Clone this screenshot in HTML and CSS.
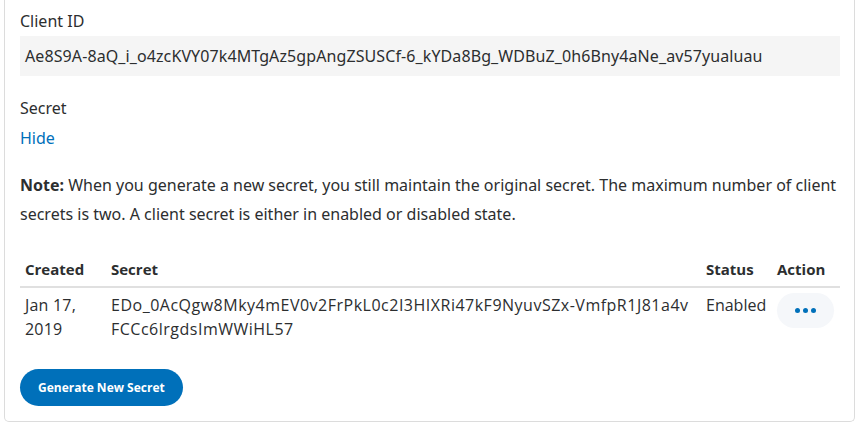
FILE: index.html
```html
<!DOCTYPE html>
<html>
<head>
<meta charset="utf-8">
<link rel="stylesheet" href="styles.css">
</head>
<body>
<div class="card">
  <div class="label">Client ID</div>
  <div class="idbox">Ae8S9A-8aQ_i_o4zcKVY07k4MTgAz5gpAngZSUSCf-6_kYDa8Bg_WDBuZ_0h6Bny4aNe_av57yualuau</div>
  <div class="label secret-label">Secret</div>
  <a class="link" href="#">Hide</a>
  <p class="note"><b>Note:</b> When you generate a new secret, you still maintain the original secret. The maximum number of client secrets is two. A client secret is either in enabled or disabled state.</p>
  <table class="secrets">
    <colgroup>
      <col class="c-created"><col class="c-secret"><col class="c-status"><col class="c-action">
    </colgroup>
    <thead>
      <tr><th>Created</th><th>Secret</th><th>Status</th><th>Action</th></tr>
    </thead>
    <tbody>
      <tr>
        <td class="date-val">Jan 17, 2019</td>
        <td class="secret-val">EDo_0AcQgw8Mky4mEV0v2FrPkL0c2I3HIXRi47kF9NyuvSZx-VmfpR1J81a4v<wbr>FCCc6lrgdsImWWiHL57</td>
        <td>Enabled</td>
        <td><button class="more" type="button"><span class="dot"></span><span class="dot"></span><span class="dot"></span></button></td>
      </tr>
    </tbody>
  </table>
  <button class="primary" type="button">Generate New Secret</button>
</div>
</body>
</html>
```
FILE: styles.css
```css
html, body {
  margin: 0;
  padding: 0;
  background: #fff;
}
body {
  font-family: "Noto Sans", "Open Sans", sans-serif;
  color: #2c2e2f;
}
.card {
  margin-left: 4px;
  width: 851px;
  box-sizing: border-box;
  height: 422px;
  border: 1px solid #dcdcdc;
  border-top: none;
  border-radius: 0 0 5px 5px;
  padding: 9px 15px 0 15px;
}
.label {
  font-size: 16px;
  line-height: 24px;
}
.idbox {
  margin-top: 3px;
  height: 40px;
  line-height: 40px;
  background: #f5f5f5;
  padding: 0 5px;
  width: 820px;
  box-sizing: border-box;
  font-size: 16px;
  letter-spacing: 0.1px;
  white-space: nowrap;
  overflow: hidden;
}
.secret-label {
  margin-top: 20px;
}
.link {
  display: block;
  margin-top: 6px;
  font-size: 16px;
  line-height: 24px;
  color: #0070ba;
  text-decoration: none;
}
.note {
  margin: 21px 0 0 0;
  font-size: 16px;
  line-height: 29px;
}
.note b {
  font-weight: 700;
}
.secrets {
  margin-top: 19px;
  width: 820px;
  border-collapse: collapse;
  table-layout: fixed;
  font-family: "Open Sans", "Noto Sans", sans-serif;
  font-size: 16px;
}
.c-created { width: 86px; }
.c-secret { width: 595px; }
.c-status { width: 71px; }
.c-action { width: 68px; }
.secrets th {
  text-align: left;
  font-weight: 700;
  font-size: 15px;
  line-height: 24px;
  padding: 9px 0 5px 5px;
  border-bottom: 2px solid #e0e0e0;
}
.secrets td {
  vertical-align: top;
  line-height: 24px;
  padding: 5px 0 0 5px;
}
.date-val {
  letter-spacing: 0.2px;
}
.secret-val {
  letter-spacing: 0.5px;
  overflow-wrap: anywhere;
}
.more {
  display: flex;
  align-items: center;
  justify-content: center;
  gap: 3px;
  width: 57px;
  height: 35px;
  border: none;
  border-radius: 18px;
  background: #f5f7fa;
  padding: 0;
  margin-top: 0;
}
.dot {
  width: 5px;
  height: 5px;
  border-radius: 50%;
  background: #0070ba;
}
.primary {
  display: block;
  margin-top: 28px;
  height: 37px;
  padding: 0 18px;
  border: none;
  border-radius: 19px;
  background: #0070ba;
  color: #fff;
  font-family: "Open Sans", "Noto Sans", sans-serif;
  font-weight: 700;
  font-size: 12px;
}
```
